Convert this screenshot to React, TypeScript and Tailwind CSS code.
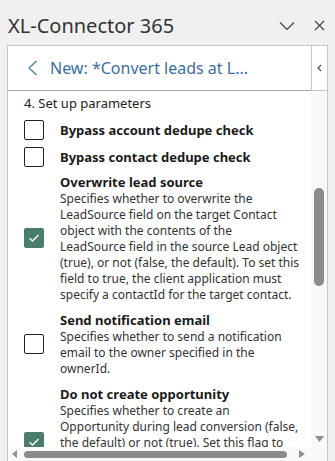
import React from 'react';

type Param = {
  title: string;
  checked: boolean;
  lines: string[];
};

const params: Param[] = [
  { title: 'Bypass account dedupe check', checked: false, lines: [] },
  { title: 'Bypass contact dedupe check', checked: false, lines: [] },
  {
    title: 'Overwrite lead source',
    checked: true,
    lines: [
      'Specifies whether to overwrite the',
      'LeadSource field on the target Contact',
      'object with the contents of the',
      'LeadSource field in the source Lead object',
      '(true), or not (false, the default). To set this',
      'field to true, the client application must',
      'specify a contactId for the target contact.'
    ]
  },
  {
    title: 'Send notification email',
    checked: false,
    lines: [
      'Specifies whether to send a notification',
      'email to the owner specified in the',
      'ownerId.'
    ]
  },
  {
    title: 'Do not create opportunity',
    checked: true,
    lines: [
      'Specifies whether to create an',
      'Opportunity during lead conversion (false,',
      'the default) or not (true). Set this flag to',
      "true only if you don't want to create an",
      'opportunity from the lead. An opportunity is',
      'created by default.'
    ]
  }
];

const gaps = ['mt-[9px]', 'mt-[7px]', 'mt-[6px]', 'mt-[8px]', 'mt-[8px]'];

function Checkbox({ checked }: { checked: boolean }) {
  if (checked) {
    return (
      <div className="w-5 h-5 shrink-0 rounded-[2px] bg-[#4b7d6b] flex items-center justify-center">
        <svg width="12" height="10" viewBox="0 0 12 10" fill="none">
          <polyline points="1.5,5.2 4.5,8 10.5,2" stroke="white" strokeWidth="1.3" />
        </svg>
      </div>
    );
  }
  return <div className="w-5 h-5 shrink-0 rounded-[2px] border border-[#222] bg-white" />;
}

function ParamRow({ p, index }: { p: Param; index: number }) {
  return (
    <div className={`flex items-center gap-4 ${gaps[index]}`}>
      <Checkbox checked={p.checked} />
      <div>
        <p className={`font-bold text-[13px] text-[#1a1a1a] ${p.lines.length ? 'leading-[18px]' : 'leading-5'}`}>
          {p.title}
        </p>
        {p.lines.map((l) => (
          <p key={l} className="text-[12px] leading-4 text-[#333] whitespace-nowrap">
            {l}
          </p>
        ))}
      </div>
    </div>
  );
}

export default function App() {
  return (
    <div
      className="w-[335px] h-[461px] bg-[#f0f0f0] overflow-hidden flex flex-col"
      style={{ fontFamily: '"Segoe UI", "Noto Sans", sans-serif' }}
    >
      <div className="h-[45px] shrink-0 flex items-center pl-2 pr-[10px] pt-[6px]">
        <h1 className="text-[20px] text-[#333] flex-1">XL-Connector 365</h1>
        <svg width="16" height="10" viewBox="0 0 16 10" className="mr-[19px]" fill="none">
          <polyline points="1,1.5 8,8.5 15,1.5" stroke="#444" strokeWidth="1.2" />
        </svg>
        <svg width="11" height="11" viewBox="0 0 11 11" fill="none">
          <path d="M1 1 L10 10 M10 1 L1 10" stroke="#444" strokeWidth="1.2" />
        </svg>
      </div>

      <div className="mx-[7px] flex-1 min-h-0 border border-b-0 border-[#c6c6c6] flex flex-col">
        <div className="h-[45px] shrink-0 flex">
          <div className="flex-1 bg-white border-b border-[#a9a9a9] flex items-center pl-[19px] gap-3">
            <svg width="11" height="16" viewBox="0 0 11 16" fill="none">
              <polyline points="9.5,1 2,8 9.5,15" stroke="#4a78a8" strokeWidth="1.2" />
            </svg>
            <span className="text-[16px] text-[#3d6d9f] whitespace-nowrap">New: *Convert leads at L...</span>
          </div>
          <div className="w-4 bg-white border-l border-b border-[#c6c6c6] flex items-center justify-center">
            <svg width="5" height="8" viewBox="0 0 5 8" fill="none">
              <polyline points="4,1 1,4 4,7" stroke="#444" strokeWidth="1.1" />
            </svg>
          </div>
        </div>

        <div className="flex-1 min-h-0 flex">
          <div className="flex-1 min-w-0 bg-white flex flex-col">
            <div className="flex-1 min-h-0 overflow-hidden pl-4 pt-[4px]">
              <p className="text-[13px] leading-4 text-[#222]">4. Set up parameters</p>
              {params.map((p, i) => (
                <ParamRow key={p.title} p={p} index={i} />
              ))}
            </div>
            <div className="h-[14px] shrink-0 bg-[#fafafa] flex items-center gap-[6px] pl-[4px] pr-[6px]">
              <svg width="6" height="8" viewBox="0 0 6 8">
                <polygon points="5,0 5,8 0,4" fill="#8f8f8f" />
              </svg>
              <div className="h-[7px] w-[265px] rounded-full bg-[#8b8b8b]" />
              <div className="flex-1" />
              <svg width="6" height="8" viewBox="0 0 6 8">
                <polygon points="0,0 0,8 6,4" fill="#8f8f8f" />
              </svg>
            </div>
          </div>
          <div className="w-4 bg-[#f9f9f9] flex flex-col items-center pt-[97px]">
            <div className="w-[10px] h-[98px] rounded-full bg-[#8b8b8b]" />
            <div className="flex-1" />
            <svg width="9" height="6" viewBox="0 0 9 6" className="mb-[19px]">
              <polygon points="0,0 9,0 4.5,6" fill="#8f8f8f" />
            </svg>
          </div>
        </div>
      </div>
    </div>
  );
}
